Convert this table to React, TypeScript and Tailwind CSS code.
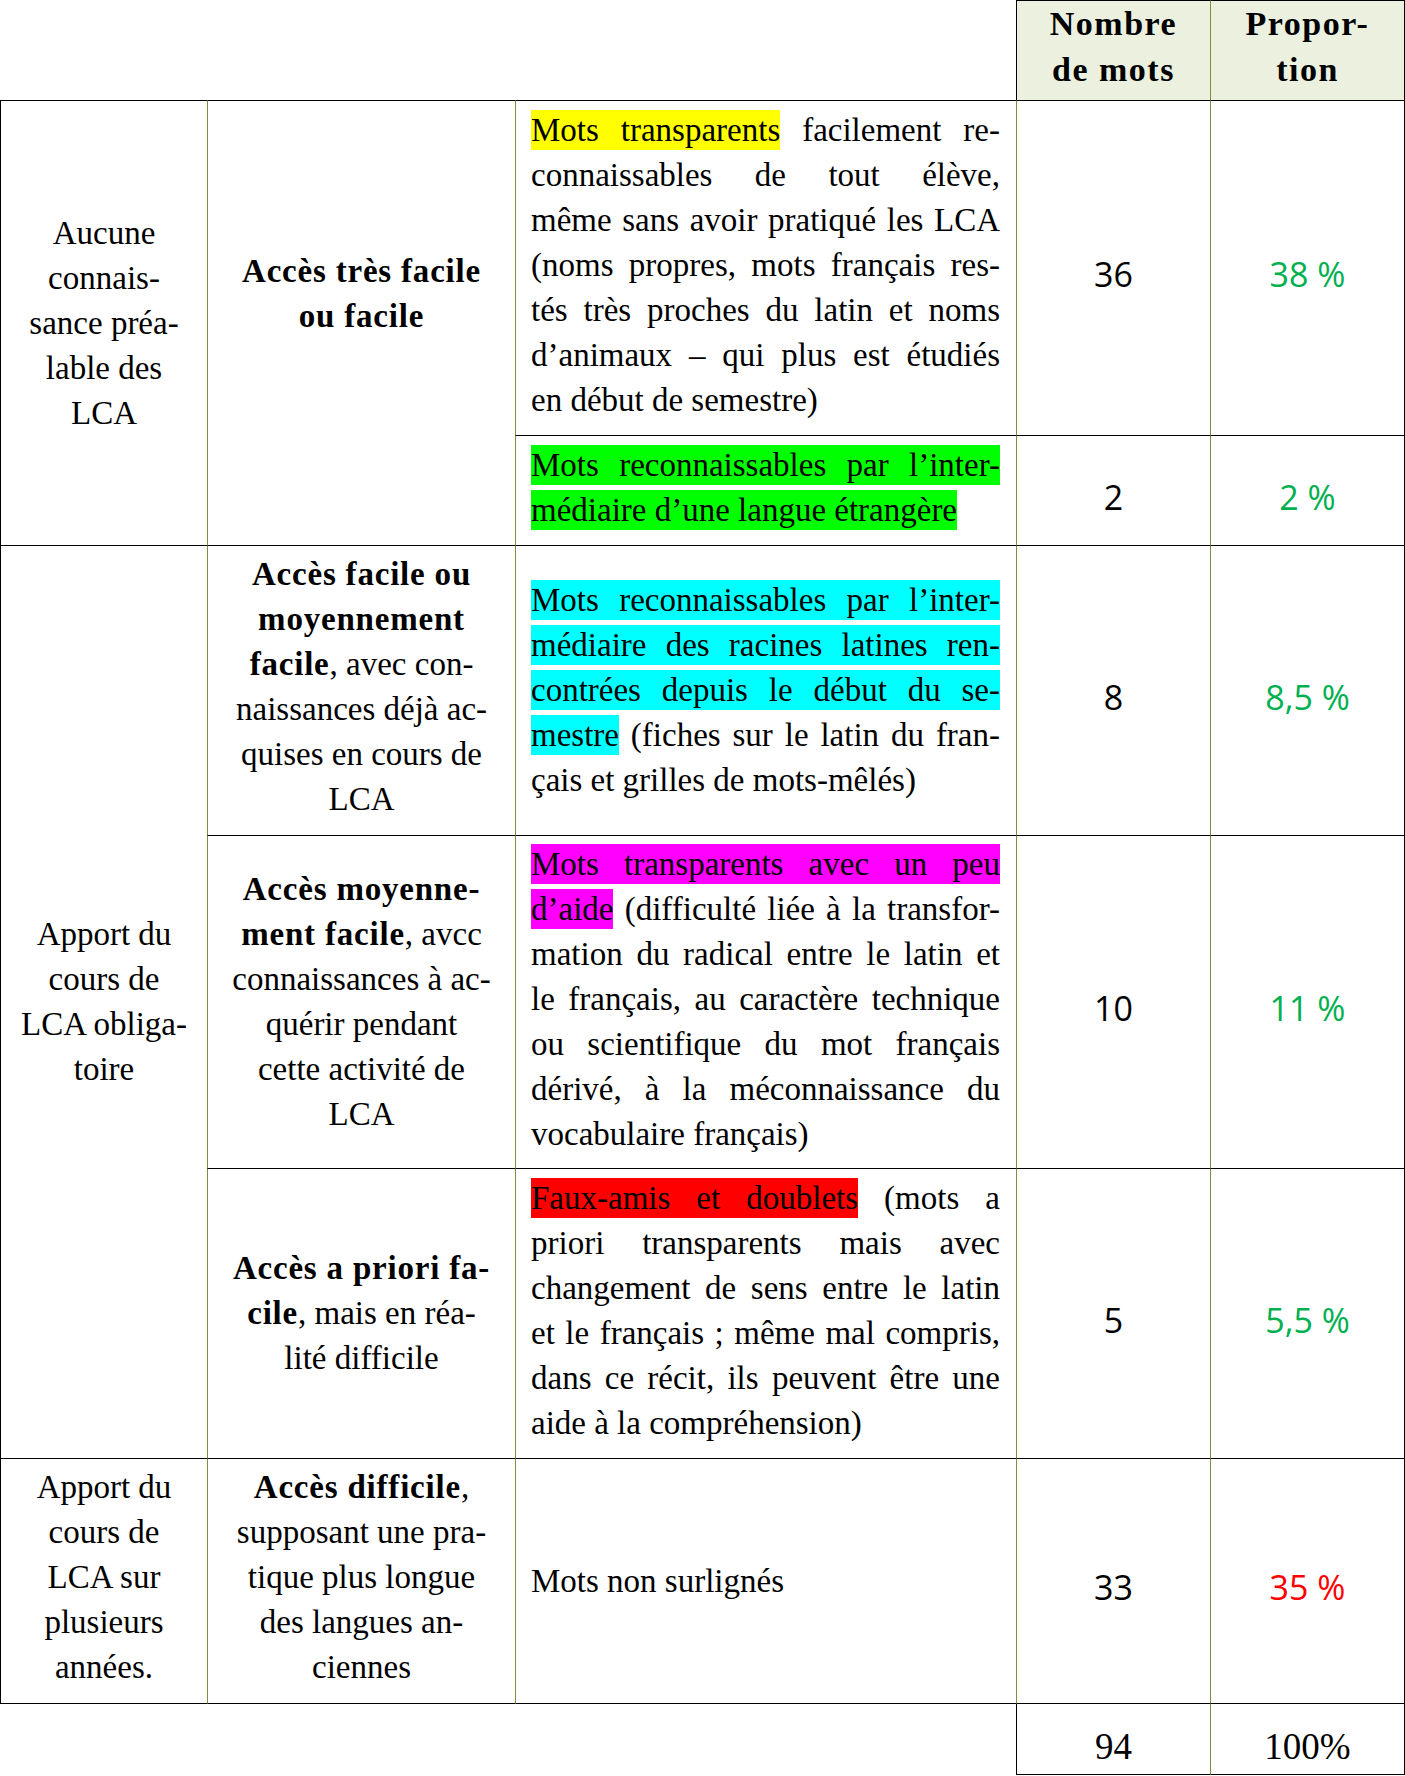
import React from "react";

const serif = "font-['Liberation_Serif',serif]";
const sans = "font-['Open_Sans',sans-serif]";

const Y = ({ children }: { children: React.ReactNode }) => (
  <span className="bg-[#ffff00] py-[2px] [box-decoration-break:clone]">{children}</span>
);
const G = ({ children }: { children: React.ReactNode }) => (
  <span className="bg-[#00ff00] py-[2px] [box-decoration-break:clone]">{children}</span>
);
const C = ({ children }: { children: React.ReactNode }) => (
  <span className="bg-[#00ffff] py-[2px] [box-decoration-break:clone]">{children}</span>
);
const M = ({ children }: { children: React.ReactNode }) => (
  <span className="bg-[#ff00ff] py-[2px] [box-decoration-break:clone]">{children}</span>
);
const R = ({ children }: { children: React.ReactNode }) => (
  <span className="bg-[#ff0000] py-[2px] [box-decoration-break:clone]">{children}</span>
);
const Bd = ({ children }: { children: React.ReactNode }) => (
  <span className="font-bold tracking-[0.8px]">{children}</span>
);

const J = ({ children }: { children: React.ReactNode }) => (
  <div className="text-justify [text-align-last:justify]">{children}</div>
);
const Lt = ({ children }: { children: React.ReactNode }) => (
  <div className="text-left">{children}</div>
);
const Ct = ({ children }: { children: React.ReactNode }) => (
  <div className="text-center whitespace-nowrap">{children}</div>
);

export default function App() {
  return (
    <div className={`w-[1405px] bg-white text-black ${serif} text-[33px] leading-[45px]`}>
      <div className="grid grid-cols-[207px_308px_501px_194px_195px] grid-rows-[100px_335px_110px_290px_333px_290px_246px_71px]">
        {/* Header */}
        <div className="col-start-4 row-start-1 border-l border-t border-black bg-[#ebf1de] text-center font-bold text-[34px] leading-[46px] tracking-[1.5px]">
          Nombre
          <br />
          de mots
        </div>
        <div className="col-start-5 row-start-1 border-l border-t border-r border-l-[#77933c] border-t-black border-r-black bg-[#ebf1de] text-center font-bold text-[34px] leading-[46px] tracking-[1.5px]">
          Propor-
          <br />
          tion
        </div>

        {/* Row 1 */}
        <div className="col-start-1 row-start-2 row-span-2 border-l border-t border-black flex flex-col justify-center">
          <Ct>Aucune</Ct>
          <Ct>connais-</Ct>
          <Ct>sance préa-</Ct>
          <Ct>lable des</Ct>
          <Ct>LCA</Ct>
        </div>
        <div className="col-start-2 row-start-2 row-span-2 border-l border-t border-l-[#77933c] border-t-black pt-[148px]">
          <Ct>
            <Bd>Accès très facile</Bd>
          </Ct>
          <Ct>
            <Bd>ou facile</Bd>
          </Ct>
        </div>
        <div className="col-start-3 row-start-2 border-l border-t border-l-[#77933c] border-t-black pt-[7px] pl-[15px] pr-[16px]">
          <J>
            <Y>Mots transparents</Y> facilement re-
          </J>
          <J>connaissables de tout élève,</J>
          <J>même sans avoir pratiqué les LCA</J>
          <J>(noms propres, mots français res-</J>
          <J>tés très proches du latin et noms</J>
          <J>d’animaux – qui plus est étudiés</J>
          <Lt>en début de semestre)</Lt>
        </div>
        <div className={`col-start-4 row-start-2 flex items-center justify-center pt-[13px] ${sans} text-[34px] leading-[45px] border-l border-t border-l-[#77933c] border-t-black`}>
          36
        </div>
        <div className={`col-start-5 row-start-2 flex items-center justify-center pt-[13px] ${sans} text-[34px] leading-[45px] text-[#00b050] border-l border-t border-r border-l-[#77933c] border-t-black border-r-black`}>
          38 %
        </div>

        <div className="col-start-3 row-start-3 border-l border-t border-l-[#77933c] border-t-black pt-[7px] pl-[15px] pr-[16px]">
          <J>
            <G>Mots reconnaissables par l’inter-</G>
          </J>
          <Lt>
            <G>médiaire d’une langue étrangère</G>
          </Lt>
        </div>
        <div className={`col-start-4 row-start-3 flex items-center justify-center pt-[13px] ${sans} text-[34px] leading-[45px] border-l border-t border-l-[#77933c] border-t-black`}>
          2
        </div>
        <div className={`col-start-5 row-start-3 flex items-center justify-center pt-[13px] ${sans} text-[34px] leading-[45px] text-[#00b050] border-l border-t border-r border-l-[#77933c] border-t-black border-r-black`}>
          2 %
        </div>

        {/* Row 2 */}
        <div className="col-start-1 row-start-4 row-span-3 border-l border-t border-black flex flex-col justify-center">
          <Ct>Apport du</Ct>
          <Ct>cours de</Ct>
          <Ct>LCA obliga-</Ct>
          <Ct>toire</Ct>
        </div>

        {/* 2a */}
        <div className="col-start-2 row-start-4 border-l border-t border-l-[#77933c] border-t-black pt-[6px]">
          <Ct>
            <Bd>Accès facile ou</Bd>
          </Ct>
          <Ct>
            <Bd>moyennement</Bd>
          </Ct>
          <Ct>
            <Bd>facile</Bd>, avec con-
          </Ct>
          <Ct>naissances déjà ac-</Ct>
          <Ct>quises en cours de</Ct>
          <Ct>LCA</Ct>
        </div>
        <div className="col-start-3 row-start-4 border-l border-t border-l-[#77933c] border-t-black pl-[15px] pr-[16px] flex flex-col justify-center">
          <J>
            <C>Mots reconnaissables par l’inter-</C>
          </J>
          <J>
            <C>médiaire des racines latines ren-</C>
          </J>
          <J>
            <C>contrées depuis le début du se-</C>
          </J>
          <J>
            <C>mestre</C> (fiches sur le latin du fran-
          </J>
          <Lt>çais et grilles de mots-mêlés)</Lt>
        </div>
        <div className={`col-start-4 row-start-4 flex items-center justify-center pt-[13px] ${sans} text-[34px] leading-[45px] border-l border-t border-l-[#77933c] border-t-black`}>
          8
        </div>
        <div className={`col-start-5 row-start-4 flex items-center justify-center pt-[13px] ${sans} text-[34px] leading-[45px] text-[#00b050] border-l border-t border-r border-l-[#77933c] border-t-black border-r-black`}>
          8,5 %
        </div>

        {/* 2b */}
        <div className="col-start-2 row-start-5 border-l border-t border-l-[#77933c] border-t-black flex flex-col justify-center">
          <Ct>
            <Bd>Accès moyenne-</Bd>
          </Ct>
          <Ct>
            <Bd>ment facile</Bd>, avcc
          </Ct>
          <Ct>connaissances à ac-</Ct>
          <Ct>quérir pendant</Ct>
          <Ct>cette activité de</Ct>
          <Ct>LCA</Ct>
        </div>
        <div className="col-start-3 row-start-5 border-l border-t border-l-[#77933c] border-t-black pt-[6px] pl-[15px] pr-[16px]">
          <J>
            <M>Mots transparents avec un peu</M>
          </J>
          <J>
            <M>d’aide</M> (difficulté liée à la transfor-
          </J>
          <J>mation du radical entre le latin et</J>
          <J>le français, au caractère technique</J>
          <J>ou scientifique du mot français</J>
          <J>dérivé, à la méconnaissance du</J>
          <Lt>vocabulaire français)</Lt>
        </div>
        <div className={`col-start-4 row-start-5 flex items-center justify-center pt-[13px] ${sans} text-[34px] leading-[45px] border-l border-t border-l-[#77933c] border-t-black`}>
          10
        </div>
        <div className={`col-start-5 row-start-5 flex items-center justify-center pt-[13px] ${sans} text-[34px] leading-[45px] text-[#00b050] border-l border-t border-r border-l-[#77933c] border-t-black border-r-black`}>
          11 %
        </div>

        {/* 2c */}
        <div className="col-start-2 row-start-6 border-l border-t border-l-[#77933c] border-t-black flex flex-col justify-center">
          <Ct>
            <Bd>Accès a priori fa-</Bd>
          </Ct>
          <Ct>
            <Bd>cile</Bd>, mais en réa-
          </Ct>
          <Ct>lité difficile</Ct>
        </div>
        <div className="col-start-3 row-start-6 border-l border-t border-l-[#77933c] border-t-black pt-[7px] pl-[15px] pr-[16px]">
          <J>
            <R>Faux-amis et doublets</R> (mots a
          </J>
          <J>priori transparents mais avec</J>
          <J>changement de sens entre le latin</J>
          <J>et le français ; même mal compris,</J>
          <J>dans ce récit, ils peuvent être une</J>
          <Lt>aide à la compréhension)</Lt>
        </div>
        <div className={`col-start-4 row-start-6 flex items-center justify-center pt-[13px] ${sans} text-[34px] leading-[45px] border-l border-t border-l-[#77933c] border-t-black`}>
          5
        </div>
        <div className={`col-start-5 row-start-6 flex items-center justify-center pt-[13px] ${sans} text-[34px] leading-[45px] text-[#00b050] border-l border-t border-r border-l-[#77933c] border-t-black border-r-black`}>
          5,5 %
        </div>

        {/* Row 3 */}
        <div className="col-start-1 row-start-7 border-l border-t border-b border-black pt-[6px]">
          <Ct>Apport du</Ct>
          <Ct>cours de</Ct>
          <Ct>LCA sur</Ct>
          <Ct>plusieurs</Ct>
          <Ct>années.</Ct>
        </div>
        <div className="col-start-2 row-start-7 border-l border-t border-b border-l-[#77933c] border-t-black border-b-black pt-[6px]">
          <Ct>
            <Bd>Accès difficile</Bd>,
          </Ct>
          <Ct>supposant une pra-</Ct>
          <Ct>tique plus longue</Ct>
          <Ct>des langues an-</Ct>
          <Ct>ciennes</Ct>
        </div>
        <div className="col-start-3 row-start-7 border-l border-t border-b border-l-[#77933c] border-t-black border-b-black pl-[15px] pr-[16px] flex flex-col justify-center">
          <Lt>Mots non surlignés</Lt>
        </div>
        <div className={`col-start-4 row-start-7 flex items-center justify-center pt-[13px] ${sans} text-[34px] leading-[45px] border-l border-t border-b border-l-[#77933c] border-t-black border-b-black`}>
          33
        </div>
        <div className={`col-start-5 row-start-7 flex items-center justify-center pt-[13px] ${sans} text-[34px] leading-[45px] text-[#ff0000] border-l border-t border-r border-b border-l-[#77933c] border-t-black border-r-black border-b-black`}>
          35 %
        </div>

        {/* Footer */}
        <div className="col-start-4 row-start-8 border-l border-b border-black pt-[20px] text-center text-[37px] leading-[45px]">
          94
        </div>
        <div className="col-start-5 row-start-8 border-l border-b border-r border-l-[#77933c] border-b-black border-r-black pt-[20px] text-center text-[37px] leading-[45px]">
          100%
        </div>
      </div>
    </div>
  );
}
